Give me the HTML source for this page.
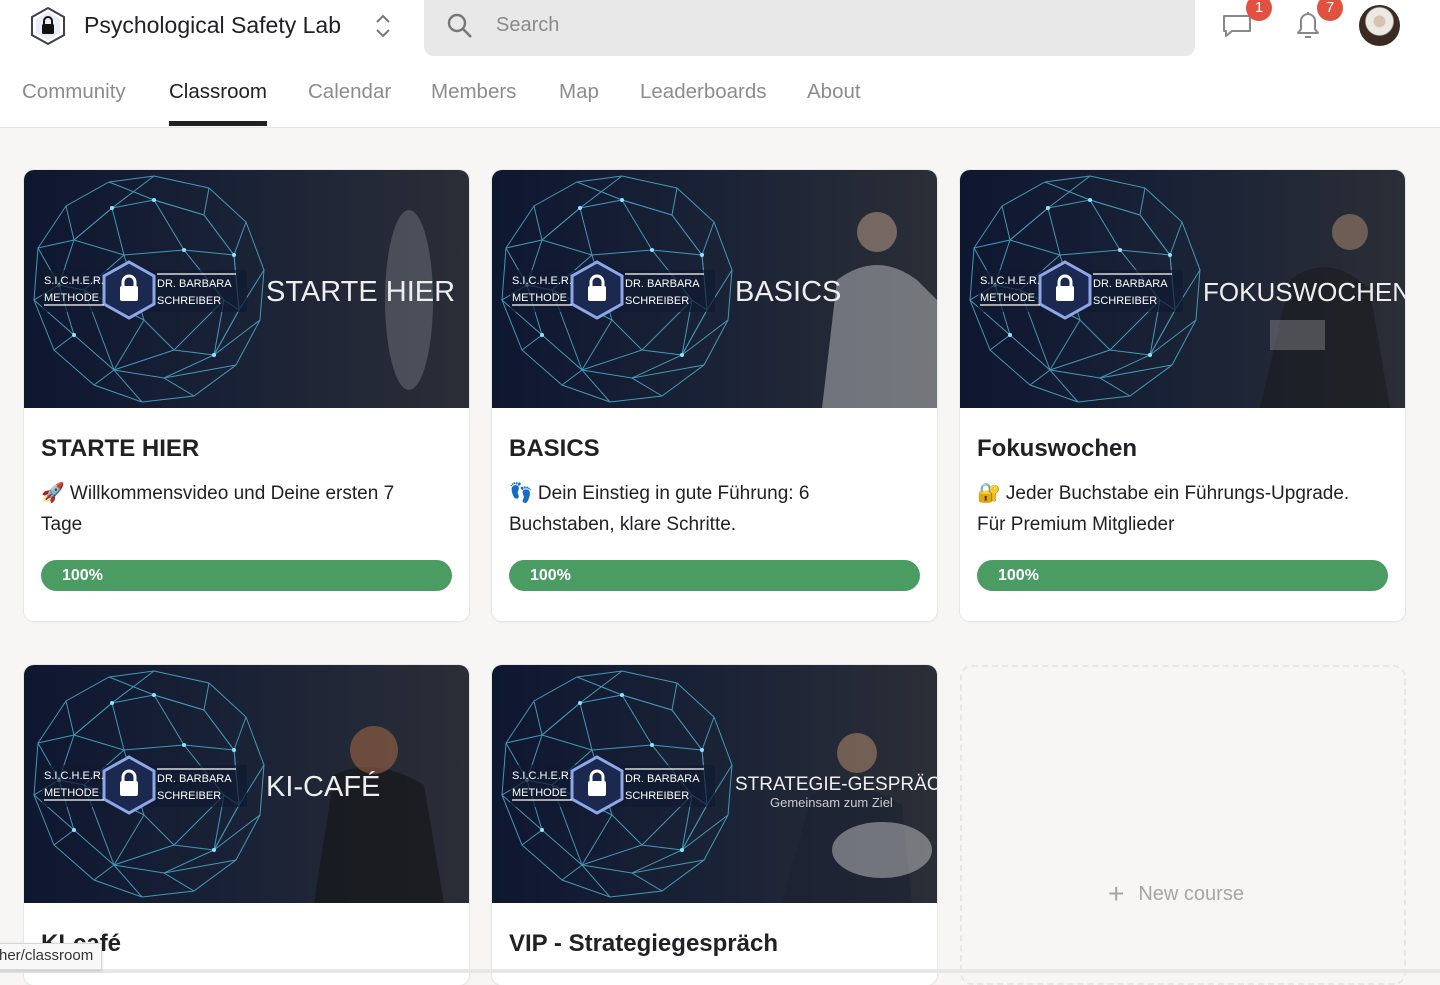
<!DOCTYPE html>
<html><head><meta charset="utf-8"><style>
*{box-sizing:border-box;margin:0;padding:0}
body{width:1440px;height:973px;overflow:hidden;background:#f7f6f4;font-family:"Liberation Sans",sans-serif;color:#202124;position:relative}
.hdr{position:absolute;left:0;top:0;width:1440px;height:128px;background:#fff;border-bottom:1px solid #e4e4e4}
.brand{position:absolute;left:84px;top:12px;font-size:23px;color:#202124}
.search{position:absolute;left:424px;top:-2px;width:771px;height:58px;background:#e8e8e8;border-radius:0 0 10px 10px}
.search span{position:absolute;left:72px;top:16px;font-size:20px;color:#8a8a8a}
.tabs{position:absolute;top:80px;left:0;font-size:20.5px;color:#8c8c8c}
.tabs span{position:absolute;white-space:nowrap}
.ul{position:absolute;left:169px;top:121px;width:98px;height:5px;background:#202124}
.badge{position:absolute;width:26px;height:26px;border-radius:13px;background:#e0513f;color:#fff;font-size:15px;text-align:center;line-height:26px}
.card{position:absolute;width:445px;background:#fff;border-radius:10px;box-shadow:0 0 0 1px #e6e6e6,0 1px 3px rgba(0,0,0,.06);overflow:hidden}
.card svg{display:block}
.t{position:absolute;left:17px;top:265px;font-size:24px;font-weight:bold;color:#202124}
.d{position:absolute;left:17px;top:308px;font-size:19px;line-height:31px;color:#202124;width:392px}
.bar{position:absolute;left:17px;top:390px;width:411px;height:31px;border-radius:16px;background:#4a9c63;color:#fff;font-weight:bold;font-size:16px;padding:7px 0 0 21px}
</style></head><body>
<svg width="0" height="0" style="position:absolute"><defs>
<linearGradient id="bg" x1="0" x2="1"><stop offset="0" stop-color="#0e1730"/><stop offset=".5" stop-color="#1a2236"/><stop offset="1" stop-color="#2b2e36"/></linearGradient>
<symbol id="sph" viewBox="0 0 445 238">
<rect width="445" height="238" fill="url(#bg)"/>
<g stroke="#4fb7d6" stroke-width="1" fill="none" opacity=".8">
<polygon points="130,6 185,18 222,52 240,100 236,150 212,195 170,226 118,232 70,215 30,180 10,130 14,78 42,36 85,12"/>
<polygon points="130,30 180,45 210,85 215,140 190,185 140,208 90,200 50,165 35,115 50,70 88,38"/>
<path d="M130,6 L88,38 L50,70 L14,78 M185,18 L180,45 L130,30 L85,12 M222,52 L210,85 L180,45 M240,100 L215,140 L210,85 M236,150 L190,185 L215,140 M212,195 L140,208 L170,226 M118,232 L90,200 L70,215 M30,180 L50,165 L10,130 L35,115 L14,78 M42,36 L50,70 M130,30 L160,80 L210,85 M88,38 L100,85 L50,70 M160,80 L100,85 L60,120 L35,115 M60,120 L90,200 M160,80 L200,130 L215,140 M200,130 L190,185 M90,200 L150,180 L190,185 M150,180 L200,130 M100,85 L120,150 L150,180 M60,120 L120,150 L90,200"/>
</g>
<g fill="#8fe3ff"><circle cx="130" cy="30" r="2"/><circle cx="88" cy="38" r="2"/><circle cx="210" cy="85" r="2"/><circle cx="50" cy="165" r="2"/><circle cx="190" cy="185" r="2"/><circle cx="160" cy="80" r="2"/><circle cx="35" cy="115" r="2"/></g>
<rect x="18" y="100" width="205" height="42" fill="#0f1a30" opacity=".7"/>
<polygon points="105,92 130,106 130,134 105,148 80,134 80,106" fill="#1b2850" stroke="#8da7e8" stroke-width="3"/>
<rect x="96" y="116" width="18" height="15" rx="2" fill="#fff"/><path d="M99,117 v-5 a6,6 0 0 1 12,0 v5" stroke="#fff" stroke-width="3" fill="none"/>
<g fill="#fff" font-family="Liberation Sans,sans-serif" font-size="11"><text x="20" y="114">S.I.C.H.E.R.</text><text x="20" y="131">METHODE</text><text x="133" y="117">DR. BARBARA</text><text x="133" y="134">SCHREIBER</text></g>
<path d="M20,135 H80 M133,104 H212" stroke="#fff" stroke-width="1.2"/>
</symbol></defs></svg>

<div class="hdr">
<svg style="position:absolute;left:29px;top:6px" width="38" height="40" viewBox="0 0 38 40"><polygon points="19,2 35,11 35,29 19,38 3,29 3,11" fill="#fff" stroke="#3a4150" stroke-width="2"/><polygon points="19,6 31,13 31,27 19,34 7,27 7,13" fill="#e8ecf8"/><rect x="13" y="18" width="12" height="10" rx="1.5" fill="#111"/><path d="M15,18 v-3 a4,4 0 0 1 8,0 v3" stroke="#111" stroke-width="2" fill="none"/></svg>
<div class="brand">Psychological Safety Lab</div>
<svg style="position:absolute;left:373px;top:13px" width="20" height="26" viewBox="0 0 20 26"><path d="M4,9 L10,3 L16,9 M4,17 L10,23 L16,17" stroke="#777" stroke-width="2" fill="none"/></svg>
<div class="search"><svg style="position:absolute;left:22px;top:14px" width="28" height="28" viewBox="0 0 28 28"><circle cx="11" cy="11" r="8" stroke="#777" stroke-width="2.4" fill="none"/><path d="M17,17 L25,25" stroke="#777" stroke-width="2.6"/></svg><span>Search</span></div>
<svg style="position:absolute;left:1220px;top:12px" width="34" height="28" viewBox="0 0 34 28"><path d="M4,4 h26 v15 h-18 l-6,5 v-5 h-2 z" stroke="#888" stroke-width="2" fill="none" stroke-linejoin="round"/></svg>
<div class="badge" style="left:1246px;top:-5px">1</div>
<svg style="position:absolute;left:1292px;top:8px" width="32" height="34" viewBox="0 0 32 34"><path d="M6,25 h20 l-3,-4 v-8 a7,7 0 0 0 -14,0 v8 z M13,29 h6" stroke="#888" stroke-width="2" fill="none" stroke-linejoin="round"/><path d="M16,4 v2" stroke="#888" stroke-width="2"/></svg>
<div class="badge" style="left:1317px;top:-5px">7</div>
<div style="position:absolute;left:1359px;top:5px;width:41px;height:41px;border-radius:50%;background:radial-gradient(circle at 50% 40%,#d9c2b0 0 18%,#ece8e4 19% 42%,#3a2a22 46%)"></div>
<div class="tabs"><span style="left:22px">Community</span><span style="left:169px;color:#202124">Classroom</span><span style="left:308px">Calendar</span><span style="left:431px">Members</span><span style="left:559px">Map</span><span style="left:640px">Leaderboards</span><span style="left:807px">About</span></div>
<div class="ul"></div>
</div>

<div class="card" style="left:24px;top:170px;height:451px"><svg width="445" height="238"><use href="#sph"/><ellipse cx="385" cy="130" rx="24" ry="90" fill="#8d929a" opacity=".35"/><text x="242" y="131" fill="#eee" font-size="29" font-family="Liberation Sans,sans-serif">STARTE HIER</text></svg>
<div class="t">STARTE HIER</div><div class="d">🚀 Willkommensvideo und Deine ersten 7 Tage</div><div class="bar">100%</div></div>

<div class="card" style="left:492px;top:170px;height:451px"><svg width="445" height="238"><use href="#sph"/><path d="M330,238 L345,110 Q385,80 425,110 L445,130 V238 Z" fill="#cfd0d2" opacity=".45"/><circle cx="385" cy="62" r="20" fill="#b89a86" opacity=".55"/><text x="243" y="131" fill="#eee" font-size="29" font-family="Liberation Sans,sans-serif">BASICS</text></svg>
<div class="t">BASICS</div><div class="d">👣 Dein Einstieg in gute Führung: 6 Buchstaben, klare Schritte.</div><div class="bar">100%</div></div>

<div class="card" style="left:960px;top:170px;height:451px"><svg width="445" height="238"><use href="#sph"/><path d="M300,238 L330,110 Q370,80 410,120 L430,238 Z" fill="#1a1a1c" opacity=".55"/><circle cx="390" cy="62" r="18" fill="#a8876e" opacity=".55"/><rect x="310" y="150" width="55" height="30" fill="#aaa" opacity=".35"/><text x="243" y="131" fill="#eee" font-size="26" font-family="Liberation Sans,sans-serif">FOKUSWOCHEN</text></svg>
<div class="t">Fokuswochen</div><div class="d">🔐 Jeder Buchstabe ein Führungs-Upgrade. Für Premium Mitglieder</div><div class="bar">100%</div></div>

<div class="card" style="left:24px;top:665px;height:320px"><svg width="445" height="238"><use href="#sph"/><path d="M290,238 L310,110 Q350,90 400,120 L420,238 Z" fill="#141416" opacity=".6"/><circle cx="350" cy="85" r="24" fill="#a86a45" opacity=".55"/><text x="242" y="131" fill="#eee" font-size="29" font-family="Liberation Sans,sans-serif">KI-CAFÉ</text></svg>
<div class="t">KI-café</div></div>

<div class="card" style="left:492px;top:665px;height:320px"><svg width="445" height="238"><use href="#sph"/><path d="M290,238 L320,130 Q360,110 410,140 L420,238 Z" fill="#1a2030" opacity=".5"/><ellipse cx="390" cy="185" rx="50" ry="28" fill="#d8d8d8" opacity=".45"/><circle cx="365" cy="88" r="20" fill="#b58a6e" opacity=".55"/><text x="243" y="125" fill="#eee" font-size="19" font-family="Liberation Sans,sans-serif">STRATEGIE-GESPRÄCH</text><text x="278" y="142" fill="#ccc" font-size="13" font-family="Liberation Sans,sans-serif">Gemeinsam zum Ziel</text></svg>
<div class="t">VIP - Strategiegespräch</div></div>

<div style="position:absolute;left:960px;top:665px;width:446px;height:320px;border:2px dashed #e6e6e6;border-radius:12px"></div>
<div style="position:absolute;left:1108px;top:878px;font-size:20px;color:#a6a6a6"><span style="font-size:28px;vertical-align:-3px;margin-right:14px">+</span>New course</div>

<div style="position:absolute;left:0;top:969px;width:1440px;height:4px;background:#e6e6e6"></div>
<div style="position:absolute;left:-2px;top:943px;height:27px;padding:3px 8px 0 0;background:#f8f8f8;border:1px solid #d8d8d8;font-size:15px;color:#333;box-shadow:0 1px 3px rgba(0,0,0,.15)">her/classroom</div>
</body></html>
